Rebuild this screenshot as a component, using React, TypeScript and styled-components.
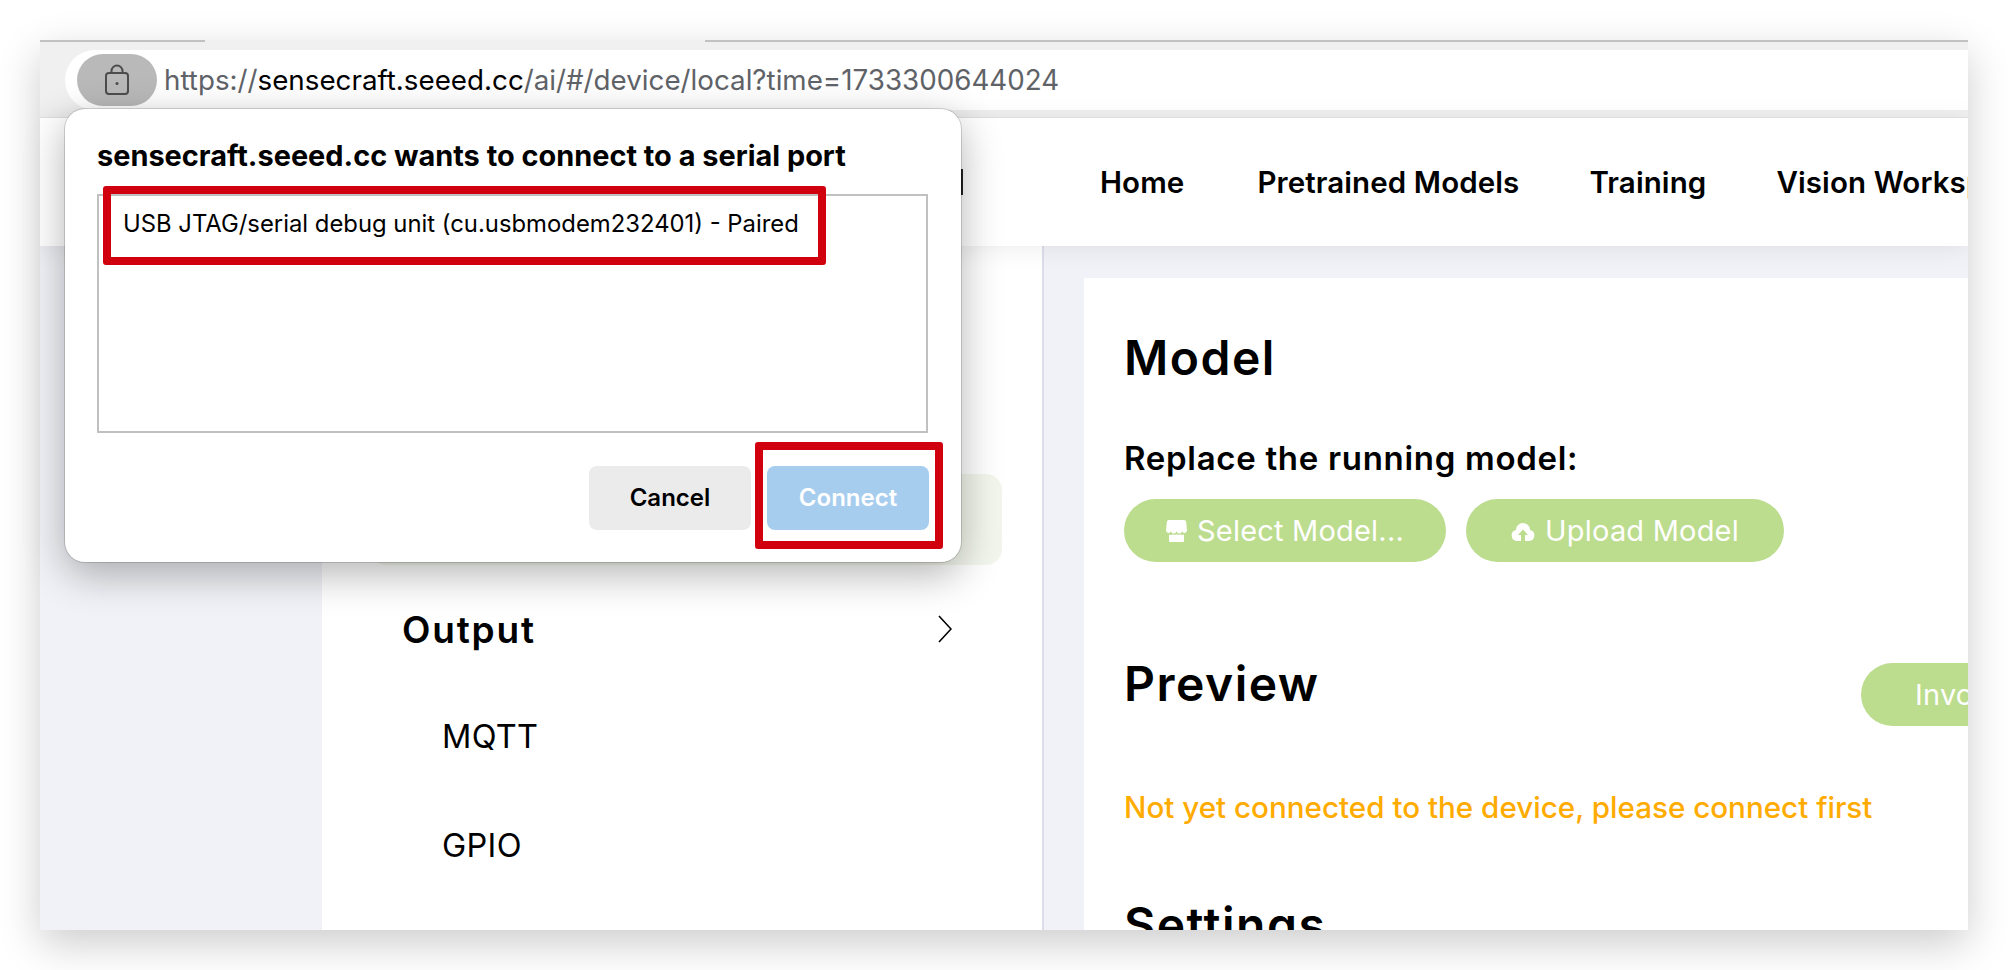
import styled, { createGlobalStyle } from 'styled-components';

const GlobalStyle = createGlobalStyle`
    html, body {
        margin: 0;
        background: #fff;
    }
    body {
        width: 2008px;
        height: 970px;
        overflow: hidden;
        font-family: Inter, 'Liberation Sans', sans-serif;
    }
`;

const Page = styled.div`
    padding: 40px;
    width: 1928px;
    height: 890px;
`;

const BrowserWindow = styled.div`
    position: relative;
    width: 1928px;
    height: 890px;
    display: flex;
    flex-direction: column;
    background: #f0f2f7;
    box-shadow: 0 14px 40px rgba(0, 0, 0, 0.2);
`;

const Clip = styled.div`
    display: flex;
    flex-direction: column;
    height: 100%;
    overflow: hidden;
`;

const TabStrip = styled.div`
    display: flex;
    height: 2px;
    flex-shrink: 0;
`;

const TabLine = styled.div<{ $grow?: boolean }>`
    width: ${(p) => (p.$grow ? 'auto' : '165px')};
    flex: ${(p) => (p.$grow ? 1 : 'none')};
    background: #c1c1c1;
`;

const ActiveTab = styled.div`
    width: 500px;
    background: #f0f0f1;
`;

const Toolbar = styled.div`
    height: 76px;
    flex-shrink: 0;
    box-sizing: border-box;
    padding: 8px 0 0 25px;
    background: #f0f0f1;
    border-bottom: 1px solid #e4e4e6;
`;

const UrlBar = styled.div`
    height: 60px;
    display: flex;
    align-items: center;
    gap: 7px;
    padding-left: 12px;
    background: #fff;
    border-radius: 30px 0 0 30px;
`;

const LockPill = styled.div`
    width: 80px;
    height: 52px;
    flex-shrink: 0;
    display: flex;
    align-items: center;
    justify-content: center;
    border-radius: 26px;
    background: #b9b9b9;
`;

const UrlText = styled.div`
    font-size: 27.75px;
    color: #5f6368;
    white-space: nowrap;
`;

const UrlHost = styled.span`
    color: #000;
`;

const SiteHeader = styled.header`
    height: 128px;
    flex-shrink: 0;
    box-sizing: border-box;
    display: flex;
    align-items: center;
    justify-content: flex-start;
    background: #fff;
    box-shadow: 0 2px 24px rgba(0, 0, 0, 0.08);
    position: relative;
    z-index: 1;
    padding-left: 921px;
`;

const HeaderDivider = styled.div`
    width: 2px;
    height: 26px;
    flex-shrink: 0;
    background: #222;
    margin-right: 137px;
`;

const NavLink = styled.a<{ $gap: number }>`
    font-size: 29.5px;
    font-weight: 600;
    letter-spacing: 0.1px;
    color: #000;
    white-space: nowrap;
    flex-shrink: 0;
    margin-right: ${(p) => p.$gap}px;
`;

const Body = styled.div`
    flex: 1;
    min-height: 0;
    display: flex;
`;

const Sidebar = styled.aside`
    width: 722px;
    margin-left: 282px;
    flex-shrink: 0;
    box-sizing: border-box;
    background: #fff;
    border-right: 2px solid #dcdfeb;
    padding: 228px 40px 0 48px;
`;

const SelectedItem = styled.div`
    height: 91px;
    width: 632px;
    border-radius: 16px;
    background: #f3f6ec;
`;

const SectionRow = styled.div`
    display: flex;
    align-items: center;
    justify-content: space-between;
    height: 106px;
    margin-top: 11px;
    padding: 0 50px 0 32px;
    width: 550px;
`;

const SectionTitle = styled.div`
    font-size: 37px;
    font-weight: 600;
    letter-spacing: 1.8px;
    color: #000;
`;

const MenuItem = styled.div`
    height: 109px;
    display: flex;
    align-items: center;
    padding-left: 72px;
    font-size: 32.5px;
    letter-spacing: 0.3px;
    color: #000;
`;

const Main = styled.main`
    flex: 1;
    margin: 32px 0 0 40px;
    background: #fff;
    padding: 48px 0 0 40px;
    overflow: hidden;
`;

const Heading = styled.h2`
    margin: 0;
    font-size: 48px;
    line-height: 64px;
    font-weight: 600;
    letter-spacing: 1.5px;
    color: #000;
`;

const SubHeading = styled.div`
    margin-top: 48px;
    font-size: 33px;
    line-height: 40px;
    font-weight: 600;
    letter-spacing: 0.7px;
    color: #000;
`;

const ButtonRow = styled.div`
    display: flex;
    gap: 20px;
    margin-top: 21px;
`;

const PillButton = styled.div<{ $width: number }>`
    width: ${(p) => p.$width}px;
    height: 63px;
    flex-shrink: 0;
    display: flex;
    align-items: center;
    justify-content: center;
    gap: 10px;
    border-radius: 32px;
    background: #bcdc8e;
    color: #fff;
    font-size: 29px;
    letter-spacing: 0.2px;
`;

const PreviewRow = styled.div`
    display: flex;
    align-items: center;
    margin-top: 86px;
    height: 72px;
`;

const PreviewHeading = styled(Heading)`
    flex: 0 0 737px;
`;

const InvokeButton = styled(PillButton)`
    justify-content: flex-start;
    padding-left: 54px;
    box-sizing: border-box;
    margin-top: 20px;
`;

const Warning = styled.div`
    margin-top: 67px;
    font-size: 29.6px;
    line-height: 40px;
    font-weight: 500;
    color: #ffab00;
`;

const SettingsHeading = styled(Heading)`
    margin-top: 66px;
`;

const Dialog = styled.div`
    position: absolute;
    left: 25px;
    top: 69px;
    z-index: 2;
    width: 896px;
    height: 453px;
    box-sizing: border-box;
    padding: 28px 32px 0;
    background: #fff;
    border-radius: 20px;
    box-shadow: 0 0 0 1px rgba(0, 0, 0, 0.15), 0 12px 40px rgba(0, 0, 0, 0.3);
`;

const DialogTitle = styled.div`
    font-size: 28.9px;
    line-height: 38px;
    font-weight: 700;
    color: #000;
`;

const PortList = styled.div`
    margin-top: 19px;
    width: 831px;
    height: 239px;
    box-sizing: border-box;
    border: 2px solid #c0c0c0;
    padding: 10px 24px;
    font-size: 23.85px;
    line-height: 36px;
    color: #000;
`;

const DialogActions = styled.div`
    display: flex;
    justify-content: flex-end;
    gap: 16px;
    margin-top: 33px;
    width: 832px;
`;

const DialogButton = styled.div<{ $primary?: boolean }>`
    width: 162px;
    height: 64px;
    display: flex;
    align-items: center;
    justify-content: center;
    padding-bottom: 2px;
    box-sizing: border-box;
    border-radius: 8px;
    font-size: 24px;
    font-weight: 600;
    background: ${(p) => (p.$primary ? '#a6cdee' : '#ebebeb')};
    color: ${(p) => (p.$primary ? '#fff' : '#000')};
`;

const Callout = styled.div<{ $left: number; $top: number; $width: number; $height: number }>`
    position: absolute;
    z-index: 3;
    left: ${(p) => p.$left}px;
    top: ${(p) => p.$top}px;
    width: ${(p) => p.$width}px;
    height: ${(p) => p.$height}px;
    box-sizing: border-box;
    border: 8px solid #d0000f;
    border-radius: 3px;
    pointer-events: none;
`;

const LockIcon = () => (
    <svg width="26" height="32" viewBox="0 0 26 32" fill="none" stroke="#4d4d4d" strokeWidth="2">
        <rect x="2" y="9" width="22" height="21" rx="3" />
        <path d="M7.5 9V7a5.5 5.5 0 0 1 11 0v2" />
        <circle cx="13" cy="19.5" r="1.5" fill="#4d4d4d" stroke="none" />
    </svg>
);

const ChevronIcon = () => (
    <svg width="14" height="28" viewBox="0 0 14 28" fill="none" stroke="#000" strokeWidth="1.6">
        <path d="M1 1l12 13L1 27" />
    </svg>
);

const ShopIcon = () => (
    <svg width="21" height="22" viewBox="0 0 21 22" fill="#fff">
        <path d="M3 0h15c1.2 0 2 .8 2.2 2l.8 8.5a2.6 2.6 0 0 1-5 .8 2.8 2.8 0 0 1-5.5 0 2.8 2.8 0 0 1-5.5 0 2.6 2.6 0 0 1-5-.8L.8 2C1 .8 1.8 0 3 0z" />
        <path d="M3 14.5c1.3.6 2.7.5 3.8-.2 1.1.7 2.6.7 3.7 0 1.1.7 2.6.7 3.7 0 1.1.7 2.5.8 3.8.2V21a1 1 0 0 1-1 1H4a1 1 0 0 1-1-1z" />
    </svg>
);

const CloudUploadIcon = () => (
    <svg width="24" height="20" viewBox="0 0 24 20">
        <path
            fill="#fff"
            fillRule="evenodd"
            d="M10 20H6a5.6 5.6 0 0 1-1.2-11A7.4 7.4 0 0 1 12 2a7.4 7.4 0 0 1 7.2 7A5.6 5.6 0 0 1 18 20h-4v-6h3l-5-5.5L7 14h3z"
        />
    </svg>
);

const App = () => {
    return (
        <Page>
            <GlobalStyle />
            <BrowserWindow>
                <Clip>
                    <TabStrip>
                        <TabLine />
                        <ActiveTab />
                        <TabLine $grow />
                    </TabStrip>
                    <Toolbar>
                        <UrlBar>
                            <LockPill>
                                <LockIcon />
                            </LockPill>
                            <UrlText>
                                https://<UrlHost>sensecraft.seeed.cc</UrlHost>/ai/#/device/local?time=1733300644024
                            </UrlText>
                        </UrlBar>
                    </Toolbar>
                    <SiteHeader>
                        <HeaderDivider />
                        <NavLink $gap={73}>Home</NavLink>
                        <NavLink $gap={70}>Pretrained Models</NavLink>
                        <NavLink $gap={70}>Training</NavLink>
                        <NavLink $gap={0}>Vision Workspace</NavLink>
                    </SiteHeader>
                    <Body>
                        <Sidebar>
                            <SelectedItem />
                            <SectionRow>
                                <SectionTitle>Output</SectionTitle>
                                <ChevronIcon />
                            </SectionRow>
                            <MenuItem>MQTT</MenuItem>
                            <MenuItem>GPIO</MenuItem>
                        </Sidebar>
                        <Main>
                            <Heading>Model</Heading>
                            <SubHeading>Replace the running model:</SubHeading>
                            <ButtonRow>
                                <PillButton $width={322}>
                                    <ShopIcon />
                                    Select Model...
                                </PillButton>
                                <PillButton $width={318}>
                                    <CloudUploadIcon />
                                    Upload Model
                                </PillButton>
                            </ButtonRow>
                            <PreviewRow>
                                <PreviewHeading>Preview</PreviewHeading>
                                <InvokeButton $width={200}>Invoke</InvokeButton>
                            </PreviewRow>
                            <Warning>Not yet connected to the device, please connect first</Warning>
                            <SettingsHeading>Settings</SettingsHeading>
                        </Main>
                    </Body>
                </Clip>
                <Dialog>
                    <DialogTitle>sensecraft.seeed.cc wants to connect to a serial port</DialogTitle>
                    <PortList>USB JTAG/serial debug unit (cu.usbmodem232401) - Paired</PortList>
                    <DialogActions>
                        <DialogButton>Cancel</DialogButton>
                        <DialogButton $primary>Connect</DialogButton>
                    </DialogActions>
                </Dialog>
                <Callout $left={63} $top={146} $width={723} $height={79} />
                <Callout $left={715} $top={402} $width={188} $height={107} />
            </BrowserWindow>
        </Page>
    );
};

export default App;
